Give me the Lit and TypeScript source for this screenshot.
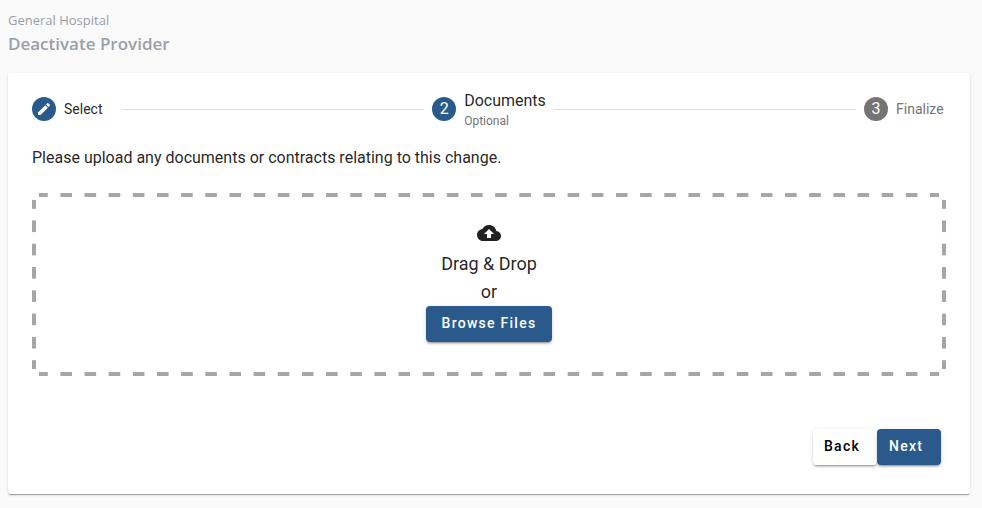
import { LitElement, html, css } from "lit";
import { customElement } from "lit/decorators.js";

@customElement("app-root")
export class AppRoot extends LitElement {
  static styles = css`
    :host {
      display: block;
      box-sizing: border-box;
      min-height: 100vh;
      padding: 10px 12px 13px 8px;
      background: #fafafa;
      color: rgba(0, 0, 0, 0.87);
      font-family: Roboto, "Liberation Sans", sans-serif;
    }
    .heading {
      margin-bottom: 15px;
      color: #9b9fa9;
      font-family: "Open Sans", "Noto Sans", sans-serif;
    }
    .facility {
      margin: 0;
      font-size: 13px;
      line-height: 20px;
      font-weight: 400;
    }
    .title {
      margin: 0;
      font-size: 17px;
      line-height: 28px;
      font-weight: 600;
    }
    .card {
      padding: 16px 24px 29px;
      background: #fff;
      border-radius: 2px;
      box-shadow: 0 2px 1px -1px rgba(0, 0, 0, 0.2),
        0 1px 1px 0 rgba(0, 0, 0, 0.14), 0 1px 3px 0 rgba(0, 0, 0, 0.12);
    }
    .steps {
      display: flex;
      align-items: center;
      gap: 8px;
      margin: 0;
      padding: 0;
      list-style: none;
    }
    .step {
      display: flex;
      align-items: center;
      gap: 8px;
      height: 40px;
    }
    .line {
      flex: 1;
      height: 1px;
      background: #dfdfdf;
    }
    .mark {
      display: flex;
      align-items: center;
      justify-content: center;
      width: 24px;
      height: 24px;
      border-radius: 50%;
      background: #2a5a8c;
      color: #fff;
      font-size: 16px;
      line-height: 24px;
    }
    .mark svg {
      width: 16px;
      height: 16px;
      fill: currentColor;
    }
    .label {
      min-width: 50px;
      font-size: 14px;
      line-height: 20px;
    }
    .active {
      padding-top: 4px;
      font-size: 16px;
    }
    .optional {
      font-size: 12px;
      color: #757575;
    }
    .pending .mark {
      background: #757575;
    }
    .pending .label {
      color: #757575;
    }
    .intro {
      margin: 17px 0 23px;
      font-size: 16px;
      line-height: 24px;
    }
    .drop {
      position: relative;
      display: flex;
      flex-direction: column;
      align-items: center;
      padding: 28px 20px 34px;
      font-size: 18px;
      line-height: 28px;
    }
    /* Dashed frame: 12px dashes, spaced so that a whole number fits each side. */
    .drop::before,
    .drop::after {
      content: "";
      position: absolute;
      pointer-events: none;
      background-origin: content-box;
    }
    .drop::before {
      --dash: linear-gradient(
        to right,
        #a6a6a6 25%,
        transparent 25% 75%,
        #a6a6a6 75%
      );
      inset: 0 7px;
      padding: 0 3px;
      background-image: var(--dash), var(--dash);
      background-size: 24px 4px;
      background-position: 0 0, 0 100%;
      background-repeat: round no-repeat;
    }
    .drop::after {
      --dash: linear-gradient(
        to bottom,
        #a6a6a6 25%,
        transparent 25% 75%,
        #a6a6a6 75%
      );
      inset: 7px 0;
      padding: 3px 0;
      background-image: var(--dash), var(--dash);
      background-size: 4px 24px;
      background-position: 0 0, 100% 0;
      background-repeat: no-repeat round;
    }
    .drop p {
      margin: 0;
    }
    .cloud {
      width: 24px;
      height: 24px;
      margin-bottom: 5px;
      fill: currentColor;
    }
    .button {
      min-width: 64px;
      height: 36px;
      padding: 0 16px 2px;
      border: 0;
      border-radius: 4px;
      background: #2a5a8c;
      color: #fff;
      font: 500 14px/34px Roboto, "Liberation Sans", sans-serif;
      letter-spacing: 0.09em;
      text-align: left;
      cursor: pointer;
      box-shadow: 0 3px 1px -2px rgba(0, 0, 0, 0.2),
        0 2px 2px 0 rgba(0, 0, 0, 0.14), 0 1px 5px 0 rgba(0, 0, 0, 0.12);
    }
    .actions {
      display: flex;
      justify-content: flex-end;
      margin: 53px 5px 0 0;
    }
    .actions .button {
      padding: 0 12px 2px;
    }
    .actions .plain {
      padding: 0 11px 2px;
      background: #fff;
      color: #000;
    }
  `;

  render() {
    return html`
      <header class="heading">
        <p class="facility">General Hospital</p>
        <h1 class="title">Deactivate Provider</h1>
      </header>
      <main class="card">
        <ol class="steps">
          <li class="step">
            <span class="mark">
              <svg viewBox="0 0 24 24" aria-hidden="true">
                <path
                  d="M3 17.25V21h3.75L17.81 9.94l-3.75-3.75L3 17.25zM20.71 7.04c.39-.39.39-1.02 0-1.41l-2.34-2.34c-.39-.39-1.02-.39-1.41 0l-1.83 1.83 3.75 3.75 1.83-1.83z"
                />
              </svg>
            </span>
            <span class="label">Select</span>
          </li>
          <li class="line" role="presentation"></li>
          <li class="step" aria-current="step">
            <span class="mark">2</span>
            <div class="label">
              <div class="active">Documents</div>
              <div class="optional">Optional</div>
            </div>
          </li>
          <li class="line" role="presentation"></li>
          <li class="step pending">
            <span class="mark">3</span>
            <span class="label">Finalize</span>
          </li>
        </ol>
        <p class="intro">
          Please upload any documents or contracts relating to this change.
        </p>
        <section class="drop">
          <svg class="cloud" viewBox="0 0 24 24" aria-hidden="true">
            <path
              d="M19.35 10.04C18.67 6.59 15.64 4 12 4 9.11 4 6.6 5.64 5.35 8.04 2.34 8.36 0 10.91 0 14c0 3.31 2.69 6 6 6h13c2.76 0 5-2.24 5-5 0-2.64-2.05-4.78-4.65-4.96zM14 13v4h-4v-4H7l5-5 5 5h-3z"
            />
          </svg>
          <p>Drag &amp; Drop</p>
          <p>or</p>
          <button class="button" type="button">Browse Files</button>
        </section>
        <div class="actions">
          <button class="button plain" type="button">Back</button>
          <button class="button" type="button">Next</button>
        </div>
      </main>
    `;
  }
}
